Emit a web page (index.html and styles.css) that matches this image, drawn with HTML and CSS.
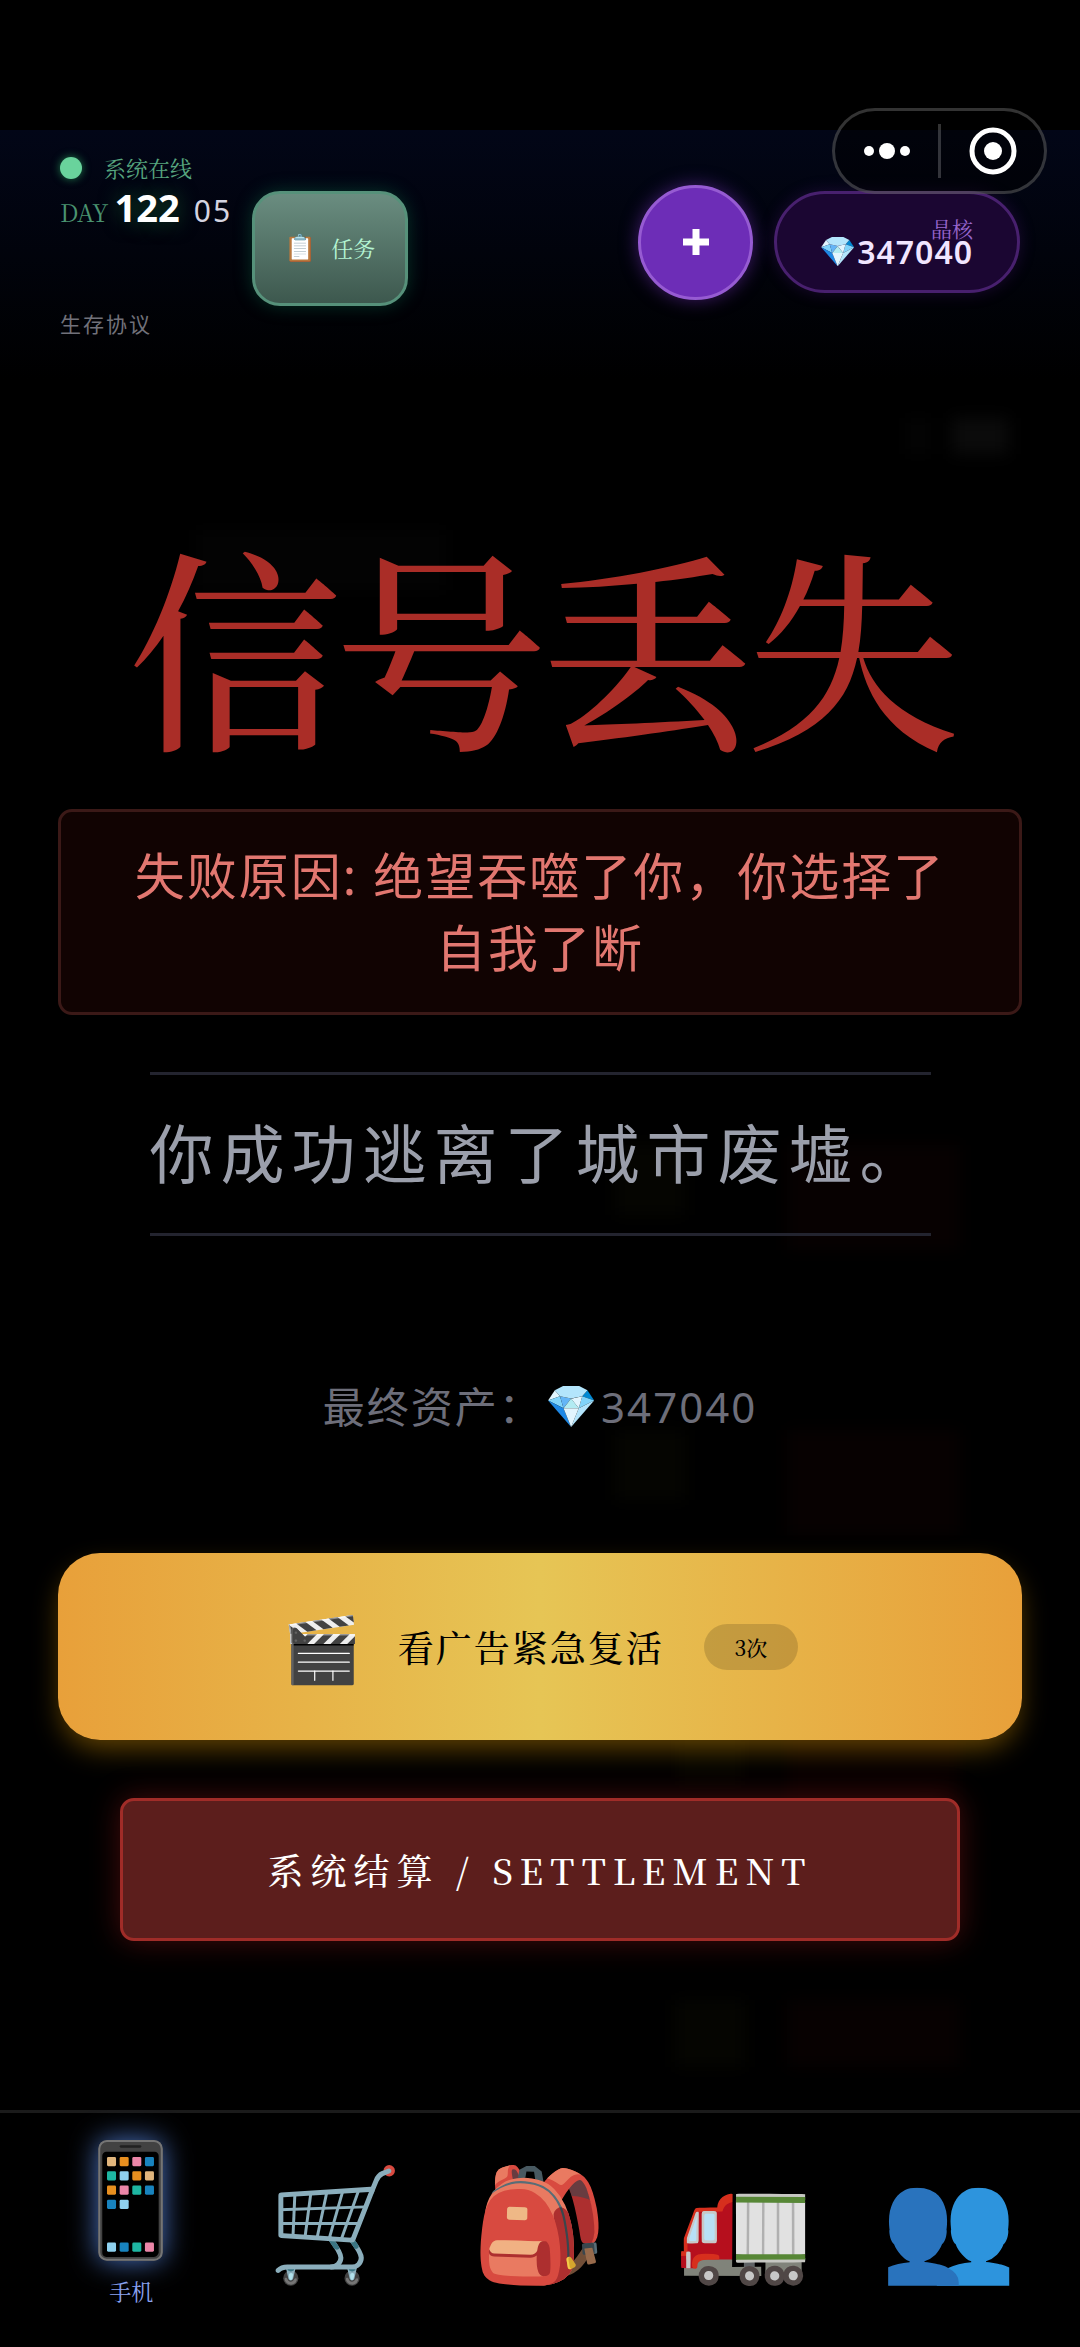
FILE: index.html
```html
<!DOCTYPE html>
<html lang="zh-CN">
<head>
<meta charset="utf-8">
<meta name="viewport" content="width=device-width, initial-scale=1">
<title>信号丢失</title>
<link rel="stylesheet" href="styles.css">
</head>
<body>
<div class="app">
  <div class="behind" aria-hidden="true">
    <div class="behind-status"><i></i><i></i></div>
    <div class="behind-title"></div>
    <div class="behind-row"><i></i><b></b></div>
    <div class="behind-row"><i></i><b></b></div>
    <div class="behind-row wide"><i></i><b></b></div>
    <div class="behind-row wide"><i></i><b></b></div>
  </div>

  <div class="capsule">
    <button class="capsule-btn" aria-label="更多">
      <svg width="50" height="50" viewBox="0 0 50 50" fill="#fff"><circle cx="7" cy="25" r="5"/><circle cx="25" cy="25" r="8"/><circle cx="43" cy="25" r="5"/></svg>
    </button>
    <button class="capsule-btn" aria-label="关闭">
      <svg width="50" height="50" viewBox="0 0 50 50"><circle cx="25" cy="25" r="21" fill="none" stroke="#fff" stroke-width="5"/><circle cx="25" cy="25" r="9" fill="#fff"/></svg>
    </button>
  </div>

  <header class="topbar">
    <div class="status">
      <div class="online"><span class="dot"></span><span>系统在线</span></div>
      <div class="day"><span class="day-label">DAY</span><strong>122</strong><span class="hour">05</span></div>
      <div class="protocol">生存协议</div>
    </div>
    <button class="task"><span class="emoji task-icon">📋</span><span>任务</span></button>
    <div class="account">
      <button class="add" aria-label="增加晶核">
        <svg width="28" height="28" viewBox="0 0 28 28"><path d="M14 1v26M1 14h26" stroke="#fff" stroke-width="7"/></svg>
      </button>
      <div class="wallet">
        <span class="wallet-label">晶核</span>
        <span class="wallet-value"><span class="emoji">💎</span>347040</span>
      </div>
    </div>
  </header>

  <main class="over">
    <h1>信号丢失</h1>
    <p class="reason">失败原因: 绝望吞噬了你，你选择了自我了断</p>
    <p class="ending">你成功逃离了城市废墟。</p>
    <p class="assets">最终资产：<span class="emoji">💎</span>347040</p>
    <button class="revive"><span class="emoji clapper">🎬</span><span class="revive-text">看广告紧急复活</span><span class="times">3次</span></button>
    <button class="settle">系统结算 / SETTLEMENT</button>
  </main>

  <nav class="tabs">
    <a href="#phone" class="tab active"><span class="emoji">📱</span><span class="tab-label">手机</span></a>
    <a href="#shop" class="tab" aria-label="商店"><span class="emoji">🛒</span></a>
    <a href="#bag" class="tab" aria-label="背包"><span class="emoji">🎒</span></a>
    <a href="#truck" class="tab" aria-label="货车"><span class="emoji">🚛</span></a>
    <a href="#people" class="tab" aria-label="同伴"><span class="emoji">👥</span></a>
  </nav>
</div>
</body>
</html>
```

FILE: styles.css
```css
:root {
  --serif: "Noto Serif CJK SC", "Noto Serif SC", "Liberation Serif", "Noto Sans CJK SC", serif;
  --sans: "Noto Sans", "Noto Sans CJK SC", sans-serif;
}
* { box-sizing: border-box; margin: 0; }
body { background: #000; color: #fff; font-family: var(--sans); }
button { font: inherit; color: inherit; border: 0; background: none; padding: 0; cursor: pointer; }
.emoji { font-family: "Noto Color Emoji", sans-serif; letter-spacing: 0; font-weight: 400; }

.app { position: relative; z-index: 0; min-height: 100vh; padding-top: 130px; display: flex; flex-direction: column; }

/* dimmed map screen showing through the overlay */
.behind {
  position: absolute; inset: 0 0 280px; z-index: -1; overflow: hidden; filter: blur(8px);
  padding: 418px 72px 0; display: flex; flex-direction: column;
}
.behind-status { display: flex; justify-content: flex-end; gap: 24px; height: 36px; flex: none; }
.behind-status i { width: 20px; background: #040404; }
.behind-status i + i { width: 56px; background: #0b0b0b; }
.behind-title { flex: none; width: 250px; height: 60px; margin: 76px 0 555px 124px; background: #030303; }
.behind-row { flex: none; display: flex; justify-content: flex-end; gap: 102px; height: 105px; margin: 0 48px 180px 0; }
.behind-row i { width: 70px; height: 70px; background: #050501; }
.behind-row b { width: 173px; background: #070101; }
.wide { gap: 42px; }

.capsule {
  position: absolute; top: 108px; right: 33px; z-index: 2;
  display: flex; align-items: center; width: 215px; height: 86px;
  border: 3px solid rgba(255, 255, 255, .2); border-radius: 43px; background: rgba(0, 0, 0, .5);
}
.capsule-btn { flex: 1; height: 54px; display: flex; align-items: center; justify-content: center; }
.capsule-btn + .capsule-btn { border-left: 3px solid rgba(255, 255, 255, .2); }

.topbar {
  display: flex; align-items: center; padding: 26px 60px 44px;
  background: linear-gradient(#020617, #000);
}
.status { margin-right: 20px; }
.online { display: flex; align-items: center; gap: 22px; font: 22px/24px var(--serif); color: #57a67f; }
.dot { width: 22px; height: 22px; border-radius: 50%; background: #69d39c; box-shadow: 0 0 8px #1f7a4c; }
.day { display: flex; align-items: baseline; gap: 6px; height: 56px; line-height: 54px; }
.day-label { font: 24px/54px var(--serif); color: #4a9370; }
.day strong { font-size: 38px; text-shadow: 0 0 20px #14532d; }
.hour { font-size: 30px; letter-spacing: 2px; color: #d4d4e0; margin-left: 8px; }
.protocol { margin-top: 76px; font-size: 21px; line-height: 24px; letter-spacing: 2px; color: #71717a; }

.task {
  display: flex; align-items: center; justify-content: center; gap: 14px; width: 156px; height: 115px; margin-top: 4px;
  border: 3px solid #56917a; border-radius: 28px; background: linear-gradient(#6a8d80, #3d584e);
  box-shadow: 0 0 18px rgba(16, 120, 80, .4); font: 22px/28px var(--serif); color: #b5f5d3;
}
.task-icon { font-size: 26px; }
.account { display: flex; align-items: center; gap: 21px; margin-left: auto; padding-bottom: 8px; }
.add {
  width: 115px; height: 115px; border-radius: 50%;
  display: flex; align-items: center; justify-content: center;
  border: 3px solid #965bd2; background: #6d2db7; box-shadow: 0 0 18px rgba(126, 50, 200, .5);
}
.wallet {
  width: 246px; height: 102px; padding: 0 44px 5px 0; border: 3px solid #48206e; border-radius: 51px;
  background: #1b0632; display: flex; flex-direction: column; align-items: flex-end; justify-content: center;
  box-shadow: 0 0 16px rgba(88, 28, 135, .3);
}
.wallet-label { font: 21px/24px var(--serif); color: #9966cd; }
.wallet-value { display: flex; align-items: center; font-size: 32px; line-height: 24px; font-weight: 600; letter-spacing: 1px; color: #f1e5ff; }
.wallet-value .emoji { font-size: 30px; }

.over { flex: 1; display: flex; flex-direction: column; align-items: center; padding: 142px 58px 168px; }
h1 { font: 500 214px/240px var(--serif); letter-spacing: -8px; color: #aa2d27; }
.reason {
  width: 100%; margin-top: 47px; padding: 28px 72px; text-align: center;
  border: 3px solid #3b1917; border-radius: 14px; background: #110302;
  font-size: 50px; line-height: 72px; letter-spacing: 2px; color: #e27770;
}
.ending {
  margin-top: 57px; padding: 29px 0; border: solid #23242f; border-width: 3px 0;
  font-size: 64px; line-height: 100px; letter-spacing: 7px; color: #9b9fab;
}
.assets { margin-top: 141px; display: flex; align-items: center; font-size: 42px; line-height: 60px; letter-spacing: 2px; color: #6d6e7a; }
.assets .emoji { margin: 0 3px; }
.revive {
  width: 100%; height: 187px; margin-top: 116px; border-radius: 42px;
  display: flex; align-items: center; justify-content: center; gap: 36px;
  background: linear-gradient(90deg, #e8a03a, #e6c555 50%, #e8a03a);
  box-shadow: 0 12px 28px -4px rgba(202, 138, 4, .5); font: 500 36px/48px var(--serif); color: #000;
}
.revive-text { letter-spacing: 2px; }
.clapper { font-size: 64px; line-height: 72px; padding-top: 8px; }
.times { width: 94px; margin-left: 4px; border-radius: 23px; background: rgba(0, 0, 0, .15); font-size: 21px; line-height: 46px; }
.settle {
  width: calc(100% - 124px); height: 143px; margin-top: 58px; border: 3px solid #a02c28; border-radius: 14px;
  background: #5c1e1c; box-shadow: 0 0 30px rgba(153, 27, 27, .45);
  font: 500 36px/48px var(--serif); letter-spacing: 7px; color: #fff;
}

.tabs { display: grid; grid-template-columns: repeat(5, 1fr); height: 237px; padding: 0 29px 12px; border-top: 3px solid #1b1b1b; }
.tab { display: flex; flex-direction: column; align-items: center; justify-content: center; gap: 18px; color: #8ba3f0; text-decoration: none; }
.tab .emoji { font-size: 110px; line-height: 116px; filter: saturate(.8); }
.tab:not(.active) { padding-top: 4px; }
.active .emoji { filter: saturate(.8) drop-shadow(0 0 14px #4a72c0); }
.tab-label { font: 22px/28px var(--serif); }
```
